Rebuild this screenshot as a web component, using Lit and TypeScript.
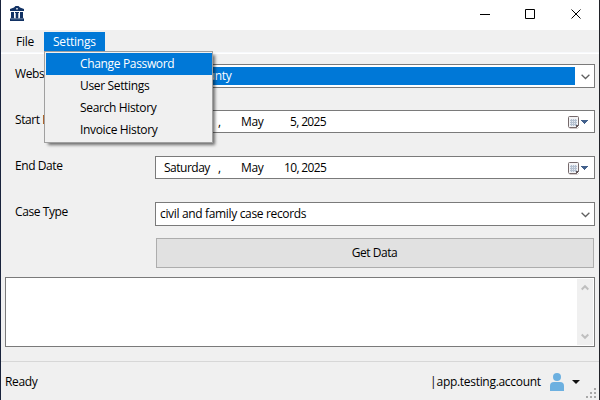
import { LitElement, html, css, svg } from "lit";
import { customElement } from "lit/decorators.js";

const chevron = html`<svg class="chev" width="9" height="6" viewBox="0 0 9 6"><path d="M.6 .8 4.5 4.5 8.4 .8" fill="none" stroke="#606060" stroke-width="1.3"/></svg>`;

const calendar = html`<svg class="cal" width="20" height="13" viewBox="0 0 20 13">
  <path d="M1.500 12.500h8l1.500-1.500" fill="none" stroke="#d3cccc"/>
  <path d="M.5 1.500q0-1 1-1h8q1 0 1 1v8l-2 2h-7q-1 0-1-1z" fill="#f4f4f6" stroke="#75696b"/>
  <path d="M2 3h7v7H2z" fill="#b4c0d0"/>
  ${[3, 5, 7, 9].map((y) => [2, 4, 6, 8].map((x) => svg`<rect x=${x} y=${y} width="1" height="1" fill="#e6ebf2"/>`))}
  <path d="M8 12V9h3z" fill="#5f5558"/>
  <path d="M13 4h7v1h-1v1h-1v1h-1v1h-1v-1h-1v-1h-1v-1h-1z" fill="#42618c"/>
</svg>`;

@customElement("app-root")
export class AppRoot extends LitElement {
  static styles = css`
    :host { display: block; width: 600px; height: 400px; }
    * { box-sizing: border-box; }
    svg { display: block; flex: none; }
    .window {
      position: relative; height: 400px; display: flex; flex-direction: column;
      background: #f0f0f0; border-left: 1px solid #19233c; border-right: 1px solid #202228;
      font: 12px/16px "Open Sans", "Noto Sans", sans-serif; letter-spacing: -0.34px;
      color: #000; white-space: pre; overflow: hidden;
    }
    .title { height: 30px; flex: none; background: #fff; display: flex; padding: 6px 17px 0 9px; }
    .controls { margin-left: auto; }
    .menubar { height: 24px; flex: none; display: flex; padding: 2px 0 0 6px; border-bottom: 1px solid #fff; box-shadow: inset 0 -1px #f7f9fc; }
    .tab { height: 19px; line-height: 20px; padding: 0 9px; letter-spacing: -0.22px; }
    .tab.file { width: 37px; }
    .tab.open { width: 61px; background: #0078d7; color: #fff; }
    .form { height: 223px; flex: none; display: grid; grid-template-columns: 140px 440px; grid-template-rows: 46px 46px 46px 38px 30px; padding: 10px 0 0 14px; }
    .label { padding-top: 2px; letter-spacing: -0.42px; }
    .field { border: 1px solid #7a7a7a; background: #fff; display: flex; align-items: center; }
    .combo { height: 24px; padding: 0 4px; }
    .combo .chev { margin: 2px 0 0 auto; }
    .selected { background: #0078d7; color: #fff; width: 418px; height: 18px; margin-left: -3px; padding-left: 2px; line-height: 18px; }
    .date { height: 23px; padding: 0 6px 0 8px; }
    .date .cal { margin: 1px 0 0 auto; }
    .day { width: 54px; letter-spacing: -0.5px; }
    .comma { width: 23px; }
    .month { width: 43px; }
    .num { width: 42px; text-align: right; letter-spacing: -0.65px; }
    .button { grid-column: 2; margin: -2px 1px 2px; height: 30px; border: 1px solid #adadad; background: #e1e1e1; display: flex; align-items: center; justify-content: center; padding-right: 1px; letter-spacing: -0.45px; }
    .log { height: 70px; flex: none; margin: 0 4px; border: 1px solid #7a7a7a; background: #fff; display: flex; padding: 1px; }
    .scroll { margin-left: auto; width: 16px; background: #f0f0f0; display: flex; flex-direction: column; justify-content: space-between; align-items: center; padding: 5px 1px 5px 0; }
    .status { margin: 14px 0 0; height: 39px; border-top: 1px solid #d7d7d7; display: flex; padding: 0 2px 0 4px; }
    .ready { padding-top: 12px; }
    .account { margin-left: auto; padding-top: 12px; width: 120px; letter-spacing: -0.3px; }
    .bar { letter-spacing: -1.6px; }
    .person { margin-top: 11px; }
    .arrow { margin: 18px 0 0 8px; }
    .grip { margin: 26px 0 0 6px; }
    .menu {
      position: absolute; left: 43px; top: 51px; width: 169px; height: 92px; padding: 1px 0 0 1px;
      background: #f0f0f0; border: 1px solid #a0a0a0; box-shadow: 3px 3px 3px -1px rgba(0,0,0,.55);
    }
    .item { height: 22px; line-height: 22px; padding-left: 34px; }
    .item.active { background: #0078d7; color: #fff; }
  `;

  private items = ["Change Password", "User Settings", "Search History", "Invoice History"];

  private date(day: string, num: string) {
    return html`<div class="field date"><span class="day">${day}</span><span class="comma">,</span><span class="month">May</span><span class="num">${num}, 2025</span>${calendar}</div>`;
  }

  render() {
    return html`<div class="window"><div class="title"><svg width="14" height="15" viewBox="0 0 14 15">
          <path d="M5.500 0h3l1.500 1.500 4 1.500v2H0V3l4-1.500z" fill="#123264"/><path d="M6 2h2v1.500H6z" fill="#b4c0d2"/>
          <path d="M1 6h3v5.500l.5 1H.5l.5-1zM10 6h3v5.500l.5 1h-4l.5-1zM5 6h4v1H8.300v5.500H5.700V7H5z" fill="#123264"/>
          <path d="M0 12.500h14V15H0z" fill="#123264"/><path d="M1 13.200h12" stroke="#7188a8" stroke-width=".5"/>
        </svg><svg class="controls" width="102" height="16" viewBox="0 0 102 16">
          <path d="M0 8.500h10M45.500 3.500h9v9h-9zM91.500 3.500l9 9M100.500 3.500l-9 9" fill="none" stroke="#000"/>
        </svg></div><div class="menubar"><div class="tab file">File</div><div class="tab open">Settings</div></div><div class="form"><div class="label">Website</div><div class="field combo"><span class="selected">Dallas County</span>${chevron}</div><div class="label">Start Date</div>${this.date("Monday", "5")}<div class="label">End Date</div>${this.date("Saturday", "10")}<div class="label">Case Type</div><div class="field combo">civil and family case records${chevron}</div><div class="button">Get Data</div></div><div class="log"><div class="scroll">
        <svg width="8" height="7" viewBox="0 0 8 7"><path d="M.7 5.500 4 2.200l3.300 3.300" fill="none" stroke="#bfbfbf" stroke-width="2"/></svg>
        <svg width="8" height="7" viewBox="0 0 8 7"><path d="M.7 1.500 4 4.800l3.300-3.300" fill="none" stroke="#bfbfbf" stroke-width="2"/></svg>
      </div></div><div class="status"><span class="ready">Ready</span><span class="account"><span class="bar">| </span>app.testing.account</span><svg class="person" width="14" height="18" viewBox="0 0 14 18">
          <circle cx="7" cy="4" r="4" fill="#6cb0e0"/><path d="M0 18v-5q0-4 4-4h6q4 0 4 4v5z" fill="#6cb0e0"/>
        </svg><svg class="arrow" width="8" height="4" viewBox="0 0 8 4"><path d="M0 0h8L4 4z" fill="#111"/></svg><svg class="grip" width="11" height="11" viewBox="0 0 11 11">
          <path d="M8 0h2v2H8zM4 4h2v2H4zM8 4h2v2H8zM0 8h2v2H0zM4 8h2v2H4zM8 8h2v2H8z" fill="#a8a8a8"/>
        </svg></div><div class="menu">${this.items.map((t, i) => html`<div class="item ${i === 0 ? "active" : ""}">${t}</div>`)}</div></div>`;
  }
}
